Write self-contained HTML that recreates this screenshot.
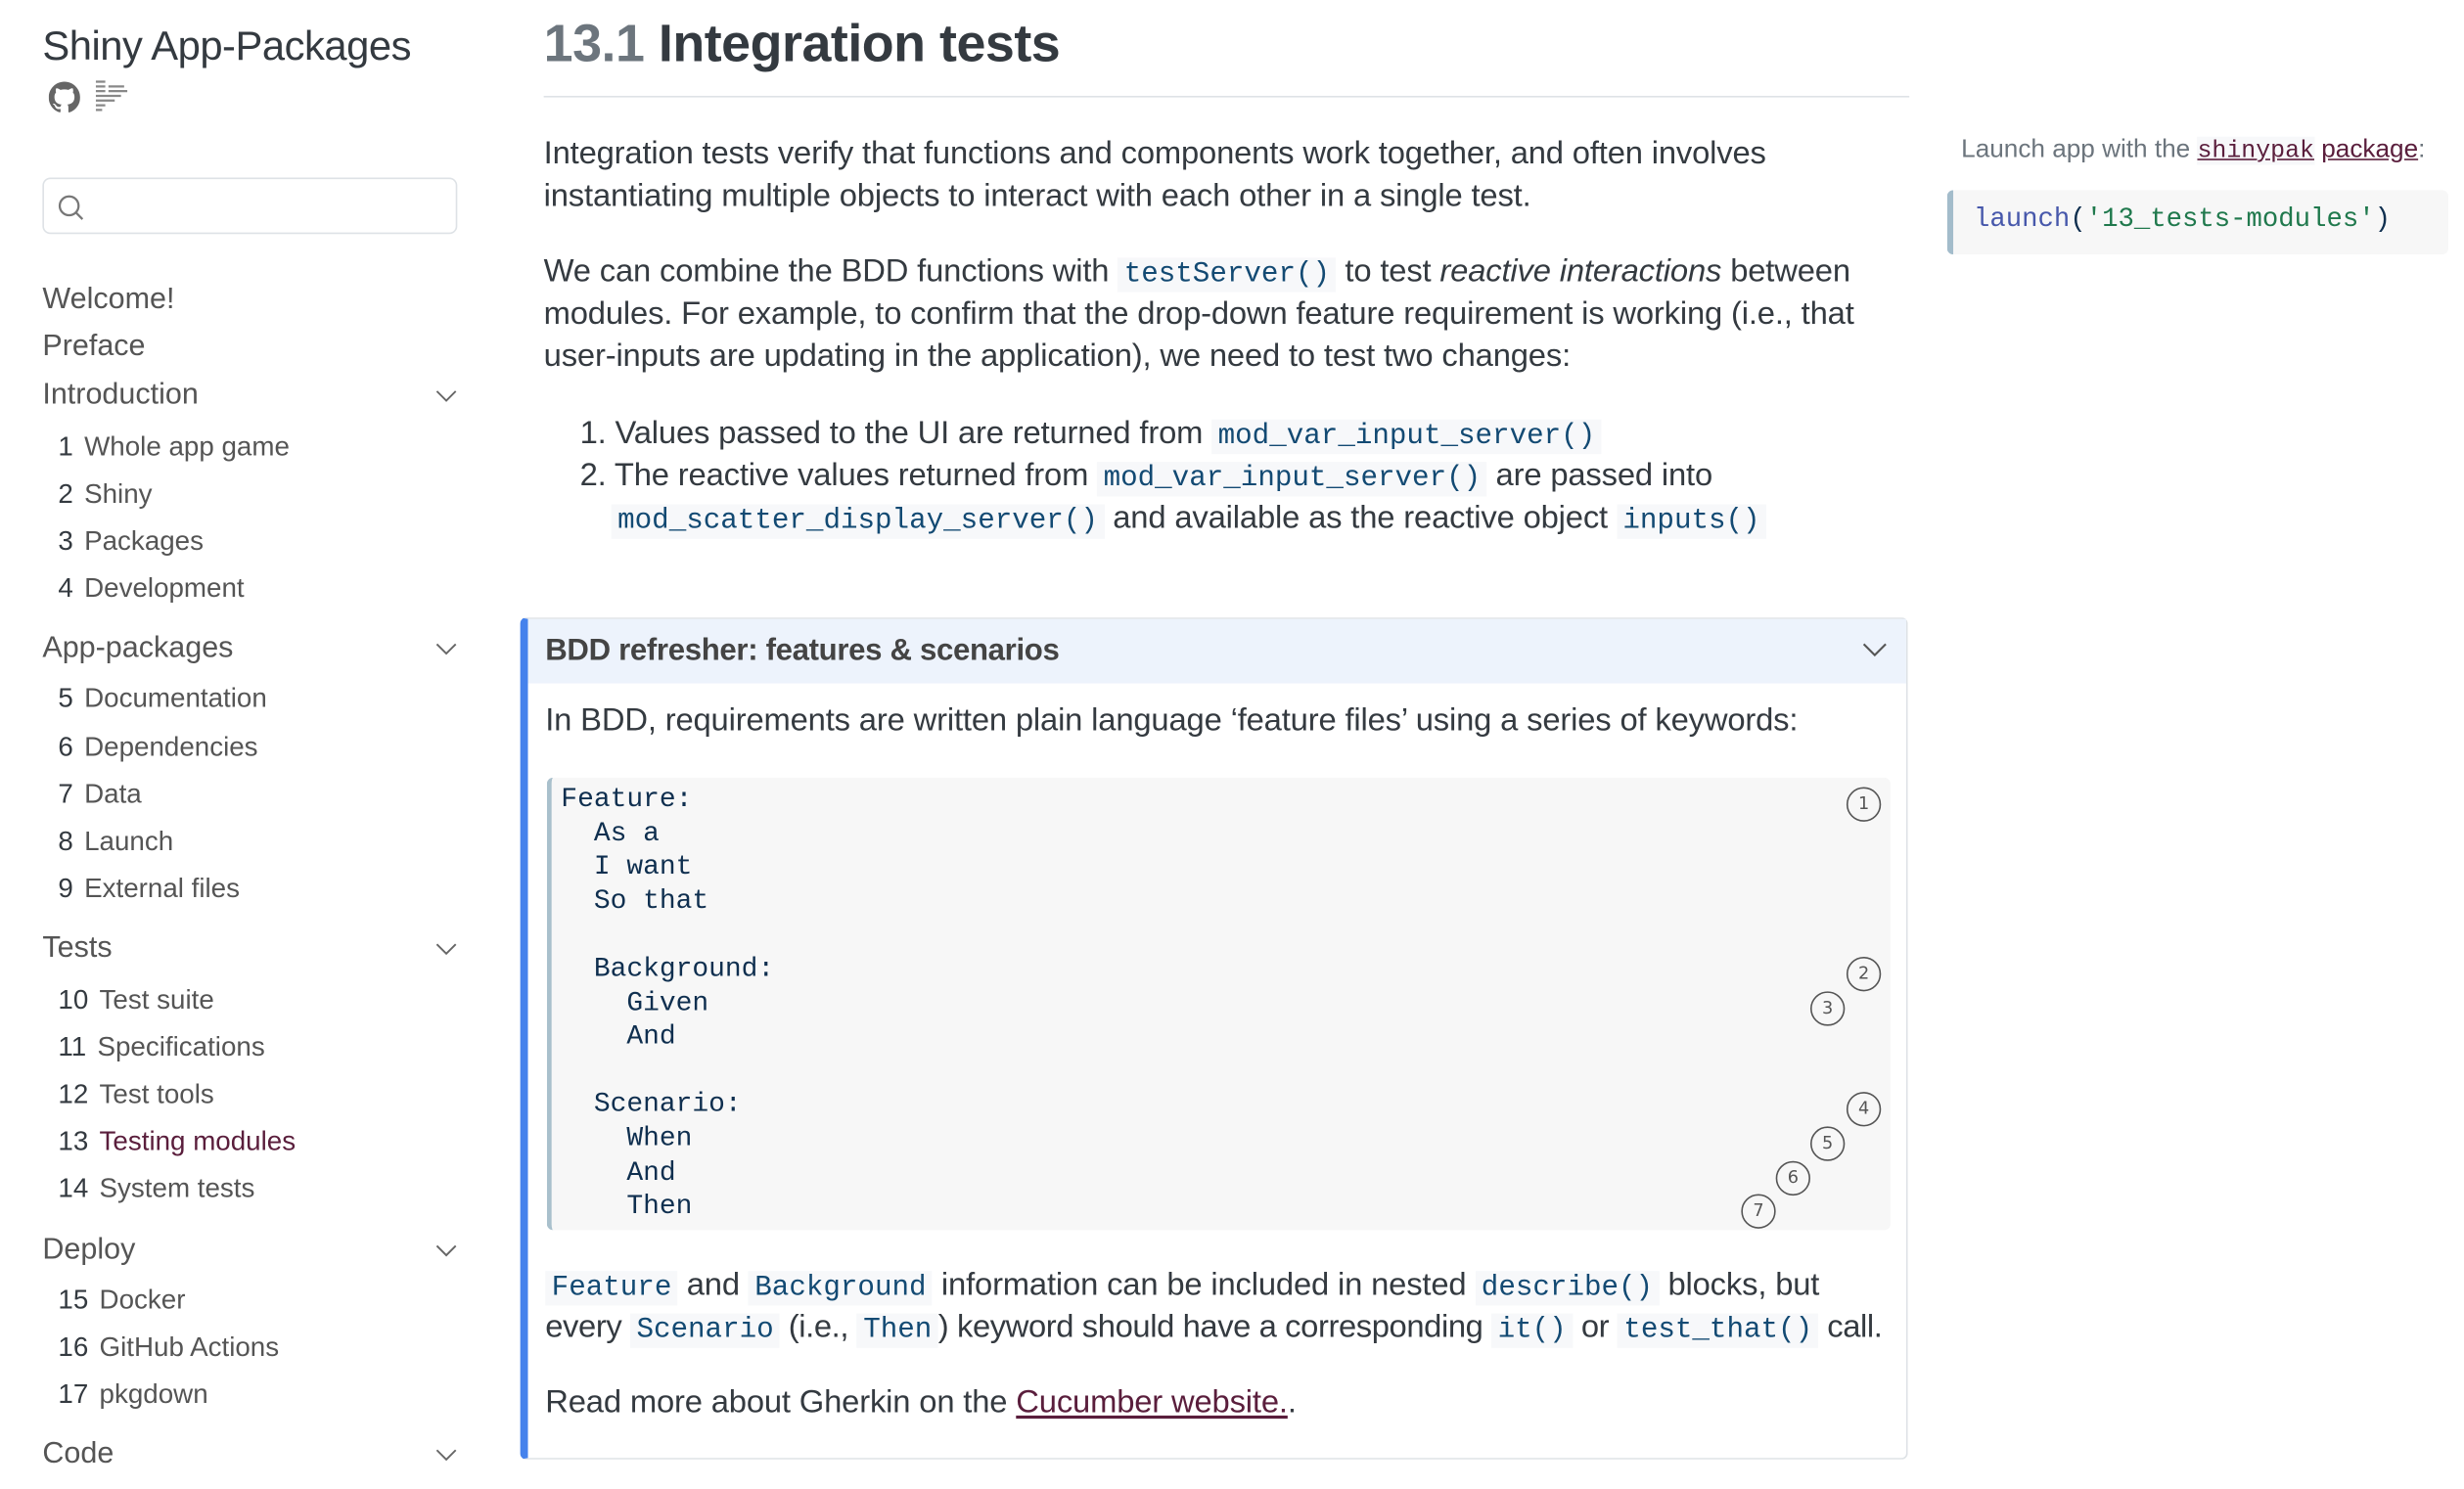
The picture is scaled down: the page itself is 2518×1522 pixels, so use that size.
<!DOCTYPE html>
<html><head><meta charset="utf-8">
<style>
html,body{margin:0;padding:0;background:#fff;width:2518px;height:1522px;overflow:hidden}
#w{position:absolute;left:0;top:0;width:1568px;height:948px;transform:scale(1.6059);transform-origin:0 0;font-family:"Liberation Sans",sans-serif;color:#343a40}
.a{position:absolute;white-space:nowrap}
.sb{font-size:17.3px;color:#555}
.sb .n{color:#343a40;margin-right:7px}
.sec{font-size:19px;color:#555}
.chev{position:absolute;left:277px;width:14px;height:8px}
.p{font-size:20.4px;color:#343a40;letter-spacing:-0.1px;margin-top:2px}
code{font-family:"Liberation Mono",monospace;font-size:18.2px;color:#134a73;background:#f7f8fa;padding:1px 4px;letter-spacing:0}
.cl{font-family:"Liberation Mono",monospace;font-size:17.4px;line-height:21.6px;color:#0f2f4f;position:absolute;left:357px;white-space:pre}
.c{position:absolute;width:20px;height:20px;border:1.3px solid #555;border-radius:50%;font-size:11px;color:#555;text-align:center;line-height:20px;font-family:"DejaVu Sans",sans-serif}
</style></head><body><div id="w">
<div class="a" style="left:27px;top:14px;font-size:26px;color:#343a40;letter-spacing:-0.3px">Shiny App-Packages</div>
<svg class="a" style="left:31px;top:52px" width="20" height="20" viewBox="0 0 16 16"><path fill="#666" d="M8 0C3.58 0 0 3.58 0 8c0 3.54 2.29 6.53 5.47 7.59.4.07.55-.17.55-.38v-1.33c-2.23.48-2.7-1.07-2.7-1.07-.36-.92-.89-1.17-.89-1.17-.73-.5.06-.49.06-.49.8.06 1.23.83 1.23.83.72 1.23 1.88.87 2.34.67.07-.52.28-.87.51-1.07-1.78-.2-3.650-.89-3.65-3.95 0-.87.31-1.59.82-2.15-.08-.2-.36-1.02.08-2.12 0 0 .67-.21 2.2.82a7.6 7.6 0 0 1 4 0c1.53-1.04 2.2-.82 2.2-.82.44 1.1.16 1.92.08 2.12.51.56.82 1.27.82 2.15 0 3.07-1.87 3.75-3.65 3.95.29.25.54.73.54 1.48v2.2c0 .21.15.46.55.38A8 8 0 0 0 16 8c0-4.42-3.58-8-8-8z"/></svg>
<svg class="a" style="left:60px;top:51px" width="24" height="20" viewBox="0 0 24 20"><g stroke="#888" stroke-width="1.4"><path d="M1 1h6M1 4h6M9 4h10M1 7h6M9 7h12M1 10h16M1 13h12M1 16h6M1 19h4"/></g></svg>
<div class="a" style="left:27px;top:113px;width:262px;height:34px;border:1px solid #dee2e6;border-radius:5px"></div>
<svg class="a" style="left:36px;top:123px" width="18" height="18" viewBox="0 0 18 18"><circle cx="8" cy="8" r="6" fill="none" stroke="#777" stroke-width="1.4"/><path d="M12.5 12.5l4 4" stroke="#777" stroke-width="1.4"/></svg>

<div class="a sec" style="left:27px;top:180px">Welcome!</div>
<div class="a sec" style="left:27px;top:210px">Preface</div>
<div class="a sec" style="left:27px;top:241px">Introduction</div>
<div class="a sb" style="left:37px;top:274px"><span class="n">1</span>Whole app game</div>
<div class="a sb" style="left:37px;top:304px"><span class="n">2</span>Shiny</div>
<div class="a sb" style="left:37px;top:334px"><span class="n">3</span>Packages</div>
<div class="a sb" style="left:37px;top:364px"><span class="n">4</span>Development</div>
<div class="a sec" style="left:27px;top:402px">App-packages</div>
<div class="a sb" style="left:37px;top:434px"><span class="n">5</span>Documentation</div>
<div class="a sb" style="left:37px;top:465px"><span class="n">6</span>Dependencies</div>
<div class="a sb" style="left:37px;top:495px"><span class="n">7</span>Data</div>
<div class="a sb" style="left:37px;top:525px"><span class="n">8</span>Launch</div>
<div class="a sb" style="left:37px;top:555px"><span class="n">9</span>External files</div>
<div class="a sec" style="left:27px;top:593px">Tests</div>
<div class="a sb" style="left:37px;top:626px"><span class="n">10</span>Test suite</div>
<div class="a sb" style="left:37px;top:656px"><span class="n">11</span>Specifications</div>
<div class="a sb" style="left:37px;top:686px"><span class="n">12</span>Test tools</div>
<div class="a sb" style="left:37px;top:716px"><span class="n">13</span><span style="color:#5a1e3c">Testing modules</span></div>
<div class="a sb" style="left:37px;top:746px"><span class="n">14</span>System tests</div>
<div class="a sec" style="left:27px;top:785px">Deploy</div>
<div class="a sb" style="left:37px;top:817px"><span class="n">15</span>Docker</div>
<div class="a sb" style="left:37px;top:847px"><span class="n">16</span>GitHub Actions</div>
<div class="a sb" style="left:37px;top:877px"><span class="n">17</span>pkgdown</div>
<div class="a sec" style="left:27px;top:915px">Code</div>
<svg class="chev" style="top:248px" viewBox="0 0 14 8"><path d="M1 1l6 6 6-6" fill="none" stroke="#666" stroke-width="1.2"/></svg>
<svg class="chev" style="top:409px" viewBox="0 0 14 8"><path d="M1 1l6 6 6-6" fill="none" stroke="#666" stroke-width="1.2"/></svg>
<svg class="chev" style="top:600px" viewBox="0 0 14 8"><path d="M1 1l6 6 6-6" fill="none" stroke="#666" stroke-width="1.2"/></svg>
<svg class="chev" style="top:792px" viewBox="0 0 14 8"><path d="M1 1l6 6 6-6" fill="none" stroke="#666" stroke-width="1.2"/></svg>
<svg class="chev" style="top:922px" viewBox="0 0 14 8"><path d="M1 1l6 6 6-6" fill="none" stroke="#666" stroke-width="1.2"/></svg>

<div class="a" style="left:346px;top:10px;font-size:33.5px;font-weight:bold;color:#343a40;letter-spacing:-0.3px"><span style="color:#6c757d">13.1</span> Integration tests</div>
<div class="a" style="left:346px;top:61px;width:869px;height:1px;background:#dee2e6"></div>

<div class="a p" style="left:346px;top:85px">Integration tests verify that functions and components work together, and often involves</div>
<div class="a p" style="left:346px;top:112px">instantiating multiple objects to interact with each other in a single test.</div>
<div class="a p" style="left:346px;top:160px">We can combine the BDD functions with <code>testServer()</code> to test <i>reactive interactions</i> between</div>
<div class="a p" style="left:346px;top:187px">modules. For example, to confirm that the drop-down feature requirement is working (i.e., that</div>
<div class="a p" style="left:346px;top:214px">user-inputs are updating in the application), we need to test two changes:</div>
<div class="a p" style="left:369px;top:263px">1. Values passed to the UI are returned from <code>mod_var_input_server()</code></div>
<div class="a p" style="left:369px;top:290px">2. The reactive values returned from <code>mod_var_input_server()</code> are passed into</div>
<div class="a p" style="left:389px;top:317px"><code>mod_scatter_display_server()</code> and available as the reactive object <code>inputs()</code></div>

<div class="a" style="left:331px;top:393px;width:883px;height:536px;border:1px solid #dee2e6;border-left:5px solid #4582ec;border-radius:4px;box-sizing:border-box"></div>
<div class="a" style="left:336px;top:394px;width:877px;height:41px;background:#edf3fc"></div>
<div class="a" style="left:347px;top:403px;font-size:19.4px;font-weight:bold;color:#444;letter-spacing:-0.2px">BDD refresher: features &amp; scenarios</div>
<svg class="a" style="left:1185px;top:409px" width="16" height="10" viewBox="0 0 16 10"><path d="M1 1l7 7 7-7" fill="none" stroke="#555" stroke-width="1.3"/></svg>
<div class="a p" style="left:347px;top:446px">In BDD, requirements are written plain language ‘feature files’ using a series of keywords:</div>
<div class="a" style="left:348px;top:495px;width:855px;height:288px;background:#f7f7f7;border-left:3px solid #a9c0cc;border-radius:4px;box-sizing:border-box"></div>
<div class="cl" style="top:499px">Feature:
  As a
  I want
  So that

  Background:
    Given
    And

  Scenario:
    When
    And
    Then</div>
<div class="c" style="left:1175px;top:501px">1</div>
<div class="c" style="left:1175px;top:609px">2</div>
<div class="c" style="left:1152px;top:631px">3</div>
<div class="c" style="left:1175px;top:695px">4</div>
<div class="c" style="left:1152px;top:717px">5</div>
<div class="c" style="left:1130px;top:739px">6</div>
<div class="c" style="left:1108px;top:760px">7</div>
<div class="a p" style="left:347px;top:805px"><code>Feature</code> and <code>Background</code> information can be included in nested <code>describe()</code> blocks, but</div>
<div class="a p" style="left:347px;top:832px;letter-spacing:-0.25px">every <code>Scenario</code> (i.e., <code>Then</code>) keyword should have a corresponding <code>it()</code> or <code>test_that()</code> call.</div>
<div class="a p" style="left:347px;top:880px">Read more about Gherkin on the <span style="color:#5a1e3c;text-decoration:underline">Cucumber website.</span>.</div>

<div class="a" style="left:1248px;top:86px;font-size:16.3px;color:#6c757d">Launch app with the <span style="font-family:'Liberation Mono',monospace;color:#5a1e3c;background:#f7f8fa;text-decoration:underline;font-size:15.5px">shinypak</span> <span style="color:#5a1e3c;text-decoration:underline">package</span>:</div>
<div class="a" style="left:1239px;top:121px;width:319px;height:41px;background:#f7f7f7;border-left:4px solid #a3bccb;border-radius:4px;box-sizing:border-box"></div>
<div class="a" style="left:1256px;top:131px;font-family:'Liberation Mono',monospace;font-size:17px;color:#0f2f4f"><span style="color:#4758ab">launch</span>(<span style="color:#20794d">'13_tests-modules'</span>)</div>
</div></body></html>
